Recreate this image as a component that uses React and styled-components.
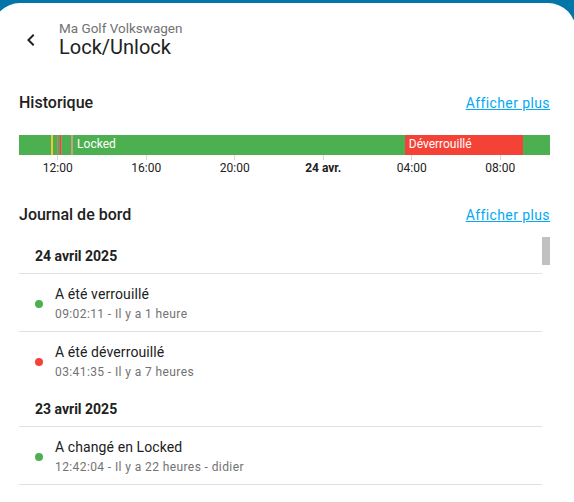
import React from 'react';
import styled, { createGlobalStyle } from 'styled-components';

const GlobalStyle = createGlobalStyle`
  html, body {
    margin: 0;
    padding: 0;
  }
  body {
    background: #0375a9;
    font-family: Roboto, 'Liberation Sans', sans-serif;
    color: #212121;
    overflow: hidden;
  }
`;

// heures depuis le 23 avril 00:00
const RANGE_START = 10.25;
const RANGE_END = 34.25;
const pct = (h) => ((h - RANGE_START) / (RANGE_END - RANGE_START)) * 100;

const GREEN = '#4caf50';
const RED = '#f44336';

const segments = [
  { from: 10.25, to: 11.7, color: GREEN },
  { from: 11.7, to: 11.79, color: '#f4c634' },
  { from: 11.79, to: 11.97, color: GREEN },
  { from: 11.97, to: 12.01, color: '#a8906c' },
  { from: 12.01, to: 12.06, color: GREEN },
  { from: 12.06, to: 12.1, color: '#c0765e' },
  { from: 12.1, to: 12.15, color: '#e8453c' },
  { from: 12.15, to: 12.19, color: '#a8906c' },
  { from: 12.19, to: 12.6, color: GREEN },
  { from: 12.6, to: 12.7, color: '#c9a07e' },
  { from: 12.7, to: 27.69, color: GREEN, label: 'Locked' },
  { from: 27.69, to: 33.04, color: RED, label: 'Déverrouillé' },
  { from: 33.04, to: 34.25, color: GREEN },
];

const ticks = [
  { at: 12, label: '12:00' },
  { at: 16, label: '16:00' },
  { at: 20, label: '20:00' },
  { at: 24, label: '24 avr.', bold: true },
  { at: 28, label: '04:00' },
  { at: 32, label: '08:00' },
];

const logbook = [
  {
    date: '24 avril 2025',
    entries: [
      { text: 'A été verrouillé', meta: '09:02:11 - Il y a 1 heure', color: GREEN },
      { text: 'A été déverrouillé', meta: '03:41:35 - Il y a 7 heures', color: RED },
    ],
  },
  {
    date: '23 avril 2025',
    entries: [
      { text: 'A changé en Locked', meta: '12:42:04 - Il y a 22 heures - didier', color: GREEN, more: true },
    ],
  },
];

export default function App() {
  return (
    <>
      <GlobalStyle />
      <Screen>
        <Dialog>
          <Header>
            <BackButton aria-label="Retour">
              <svg width="24" height="24" viewBox="0 0 24 24">
                <path fill="#212121" d="M15.41,16.58L10.83,12L15.41,7.41L14,6L8,12L14,18L15.41,16.58Z" />
              </svg>
            </BackButton>
            <Titles>
              <Subtitle>Ma Golf Volkswagen</Subtitle>
              <Title>Lock/Unlock</Title>
            </Titles>
          </Header>

          <Section>
            <SectionHeader>
              <SectionTitle>Historique</SectionTitle>
              <MoreLink href="#">Afficher plus</MoreLink>
            </SectionHeader>
            <Timeline>
              <Bar>
                {segments.map((s, i) => (
                  <Segment key={i} $color={s.color} style={{ width: `${pct(s.to) - pct(s.from)}%` }}>
                    {s.label}
                  </Segment>
                ))}
              </Bar>
              <Axis>
                {ticks.map((t) => (
                  <Tick key={t.label} style={{ left: `${pct(t.at)}%` }}>
                    <TickLine />
                    <TickLabel $bold={t.bold}>{t.label}</TickLabel>
                  </Tick>
                ))}
              </Axis>
            </Timeline>
          </Section>

          <Section>
            <SectionHeader>
              <SectionTitle>Journal de bord</SectionTitle>
              <MoreLink href="#">Afficher plus</MoreLink>
            </SectionHeader>
            <LogList>
              {logbook.map((day) => (
                <React.Fragment key={day.date}>
                  <DateHeader>{day.date}</DateHeader>
                  {day.entries.map((e, i) => (
                    <Entry key={e.meta} $divider={i < day.entries.length - 1 || e.more}>
                      <Dot $color={e.color} />
                      <EntryText>
                        <Primary>{e.text}</Primary>
                        <Secondary>{e.meta}</Secondary>
                      </EntryText>
                    </Entry>
                  ))}
                </React.Fragment>
              ))}
              <ScrollThumb />
            </LogList>
          </Section>
        </Dialog>
      </Screen>
    </>
  );
}

const Screen = styled.div`
  width: 574px;
  height: 502px;
  overflow: hidden;
`;

const Dialog = styled.div`
  margin: 3px -2px 0 -8px;
  padding: 13px 26px 0 27px;
  min-height: 560px;
  background: #fff;
  border-radius: 28px 28px 0 0;
`;

const Header = styled.div`
  display: flex;
  align-items: center;
  gap: 4px;
  height: 48px;
  margin-left: -12px;
`;

const BackButton = styled.button`
  width: 48px;
  height: 48px;
  display: flex;
  align-items: center;
  justify-content: center;
  padding: 0;
  border: none;
  border-radius: 50%;
  background: transparent;
  cursor: pointer;
`;

const Titles = styled.div`
  display: flex;
  flex-direction: column;
`;

const Subtitle = styled.div`
  font-size: 13.5px;
  line-height: 14px;
  color: #727272;
`;

const Title = styled.div`
  font-size: 20px;
  line-height: 24px;
  color: #212121;
`;

const Section = styled.div`
  margin-top: 27px;
`;

const SectionHeader = styled.div`
  display: flex;
  align-items: center;
  justify-content: space-between;
  height: 24px;
`;

const SectionTitle = styled.div`
  font-size: 16px;
  line-height: 24px;
  font-weight: 500;
  color: #212121;
`;

const MoreLink = styled.a`
  font-size: 14px;
  line-height: 20px;
  letter-spacing: 0.4px;
  color: #03a9f4;
  text-decoration: underline;
`;

const Timeline = styled.div`
  margin-top: 20px;
`;

const Bar = styled.div`
  display: flex;
  height: 20px;
`;

const Segment = styled.div`
  flex: none;
  height: 20px;
  background: ${(p) => p.$color};
  color: #fff;
  font-size: 12px;
  line-height: 18px;
  padding-left: 4px;
  box-sizing: border-box;
  white-space: nowrap;
  overflow: hidden;
  &:empty {
    padding-left: 0;
  }
`;

const Axis = styled.div`
  position: relative;
  height: 21px;
`;

const Tick = styled.div`
  position: absolute;
  top: 0;
  display: flex;
  flex-direction: column;
  align-items: center;
  transform: translateX(-50%);
`;

const TickLine = styled.div`
  width: 1px;
  height: 5px;
  background: #d6d6d6;
`;

const TickLabel = styled.div`
  font-size: 12px;
  line-height: 16px;
  font-weight: ${(p) => (p.$bold ? 700 : 400)};
  color: #212121;
  white-space: nowrap;
`;

const LogList = styled.div`
  position: relative;
  margin-top: 10px;
  padding-right: 8px;
  height: 280px;
  overflow: hidden;
`;

const ScrollThumb = styled.div`
  position: absolute;
  top: 0;
  right: 0;
  width: 8px;
  height: 28px;
  background: #c1c1c1;
`;

const DateHeader = styled.div`
  height: 37px;
  padding: 9px 16px 0;
  box-sizing: border-box;
  border-bottom: 1px solid #e0e0e0;
  font-size: 14px;
  line-height: 20px;
  font-weight: 700;
  color: #212121;
`;

const Entry = styled.div`
  display: flex;
  align-items: center;
  gap: 12px;
  height: 58px;
  padding-left: 16px;
  box-sizing: border-box;
  border-bottom: 1px solid ${(p) => (p.$divider ? '#e0e0e0' : 'transparent')};
`;

const Dot = styled.span`
  flex: none;
  width: 8px;
  height: 8px;
  border-radius: 50%;
  background: ${(p) => p.$color};
  margin-top: 2px;
`;

const EntryText = styled.div`
  display: flex;
  flex-direction: column;
  gap: 2px;
`;

const Primary = styled.div`
  font-size: 14px;
  line-height: 20px;
  letter-spacing: 0.1px;
  color: #212121;
`;

const Secondary = styled.div`
  font-size: 12px;
  line-height: 16px;
  letter-spacing: 0.4px;
  color: #727272;
`;
